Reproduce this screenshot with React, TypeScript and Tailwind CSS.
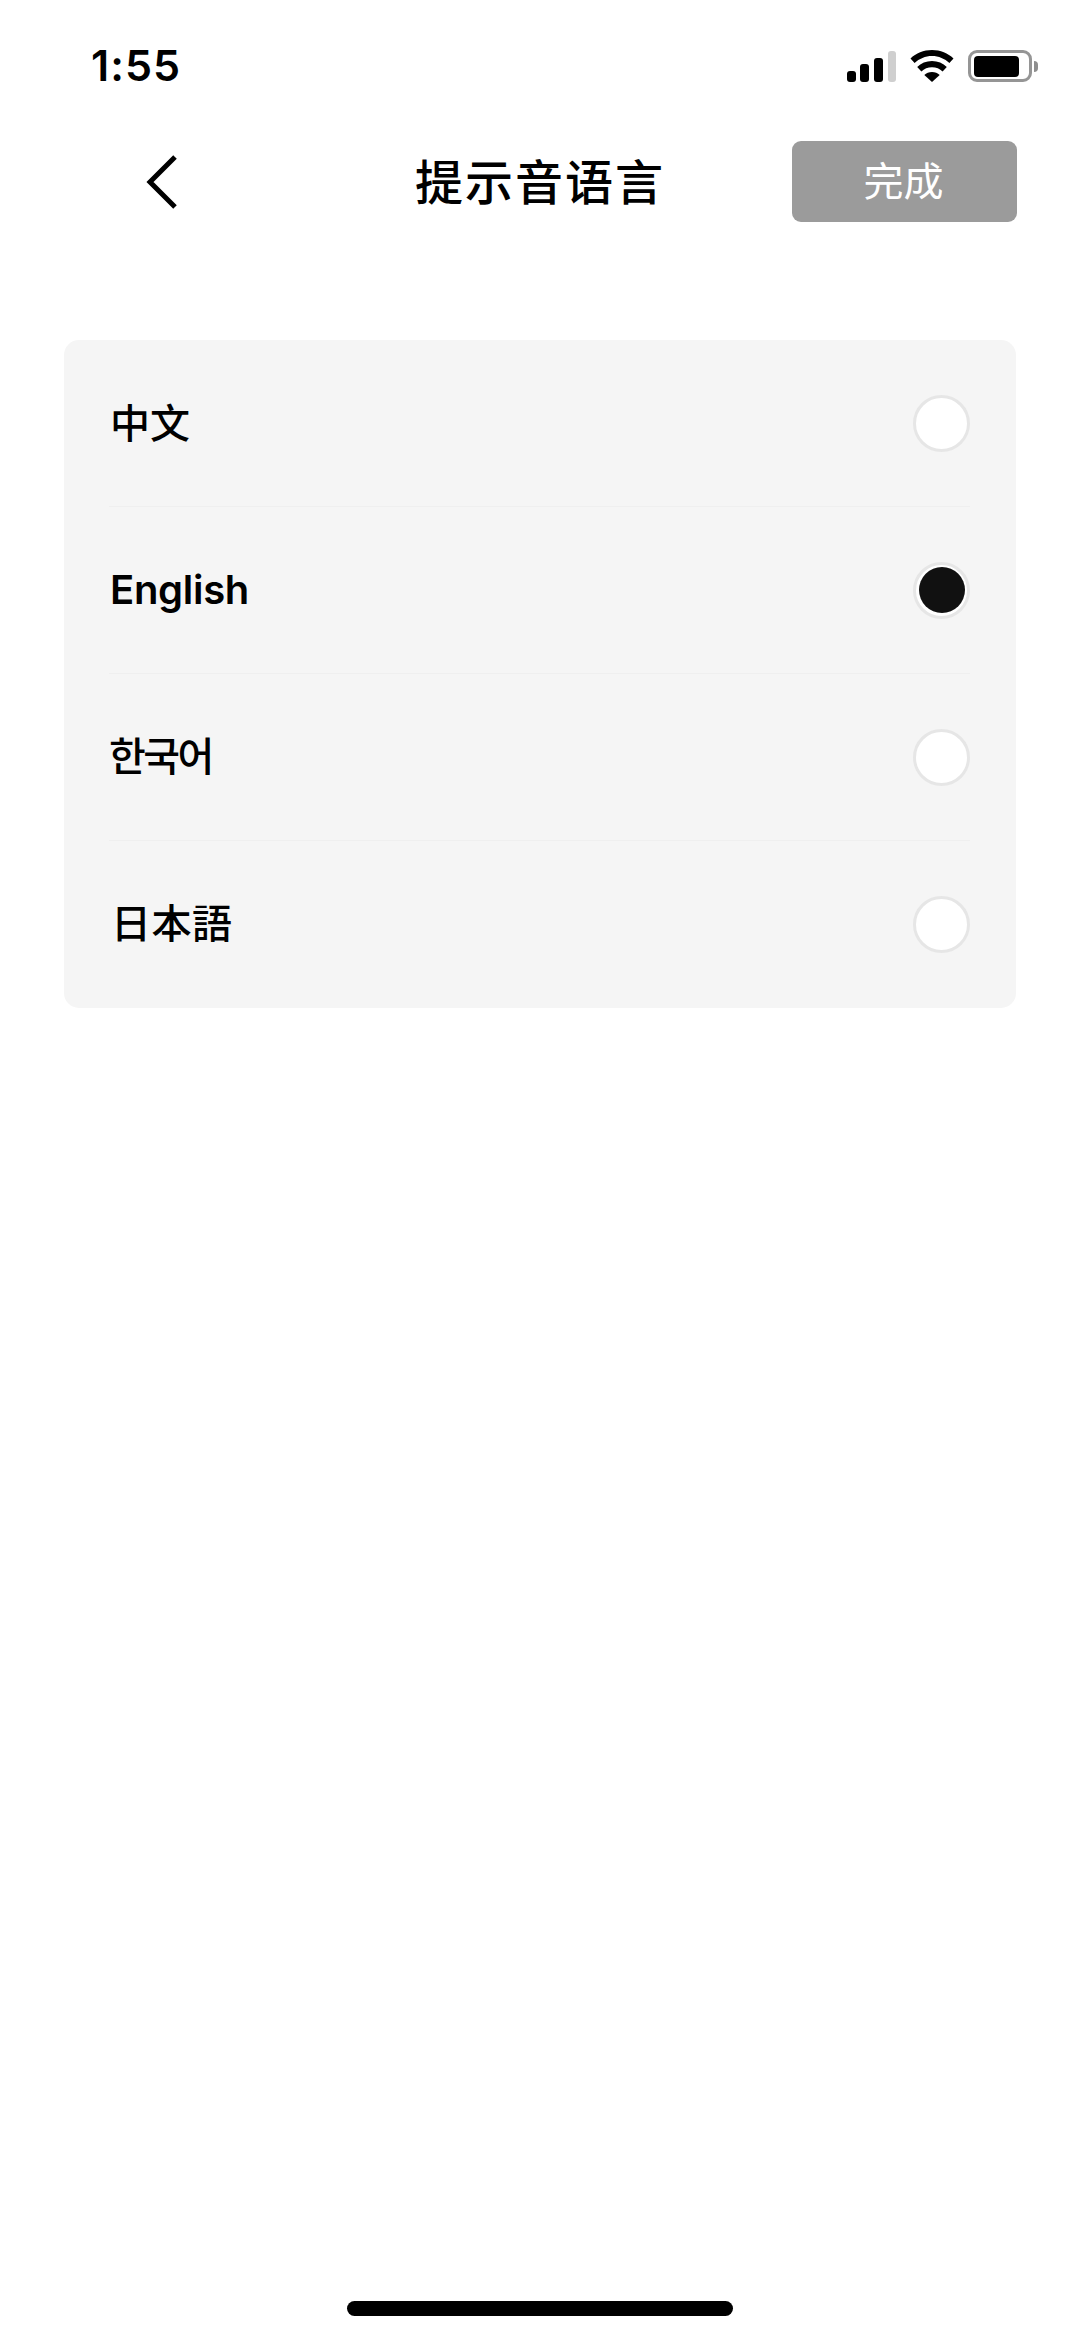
import React, { useState } from 'react';

const languages = [
  { id: 'zh', label: '中文', font: "font-['Inter','Noto_Sans_CJK_SC',sans-serif]", textClass: 'pl-[46px] pt-[1px] font-medium' },
  { id: 'en', label: 'English', font: "font-['Inter','Noto_Sans_CJK_SC',sans-serif]", textClass: 'pl-[46px] font-semibold tracking-[-0.300px]' },
  { id: 'ko', label: '한국어', font: "font-['Inter','Noto_Sans_CJK_KR',sans-serif]", textClass: 'pl-[45px] font-medium tracking-[-2.500px]' },
  { id: 'ja', label: '日本語', font: "font-['Inter','Noto_Sans_CJK_JP',sans-serif]", textClass: 'pl-[47px] font-medium tracking-[0.500px]' },
];

const StatusIcons = () => (
  <div className="flex items-center">
    {/* signal */}
    <svg width="49" height="31" viewBox="0 0 49 31" className="mr-[14px]">
      <rect x="0" y="20" width="9" height="11" rx="3" fill="#000" />
      <rect x="13" y="13" width="9" height="18" rx="3" fill="#000" />
      <rect x="27" y="7" width="9" height="24" rx="3" fill="#000" />
      <rect x="41" y="0" width="8" height="31" rx="3" fill="#cfcfcf" />
    </svg>
    {/* wifi */}
    <svg width="44" height="32" viewBox="0 0 44 32" className="mr-[14px]">
      <path d="M22 0C13.600 0 6 3.200 0.500 8.500L4.600 13C9.200 8.700 15.300 6 22 6s12.800 2.700 17.400 7l4.100-4.500C38 3.200 30.400 0 22 0z" fill="#000" />
      <path d="M22 11c-5.800 0-11 2.200-14.800 5.900l4.200 4.500C14.100 18.800 17.900 17.200 22 17.200s7.900 1.600 10.600 4.200l4.200-4.500C33 13.200 27.800 11 22 11z" fill="#000" />
      <path d="M22 22c-3 0-5.700 1.100-7.700 3L22 32l7.700-7c-2-1.900-4.700-3-7.700-3z" fill="#000" />
    </svg>
    {/* battery */}
    <div className="flex items-center">
      <div className="flex h-[32px] w-[64px] items-center rounded-[9px] border-[3px] border-[#959595] pl-[3px]">
        <div className="h-[21px] w-[45px] rounded-[4px] bg-black" />
      </div>
      <div className="ml-[2px] h-[11px] w-[4px] rounded-r-full bg-[#8e8e8e]" />
    </div>
  </div>
);

const App: React.FC = () => {
  const [selected, setSelected] = useState('en');

  return (
    <div className="flex h-[2339px] w-[1080px] flex-col bg-white font-['Inter','Noto_Sans_CJK_SC',sans-serif] text-black">
      {/* status bar */}
      <div className="flex h-[141px] items-start justify-between pl-[91px] pr-[42px] pt-[50px]">
        <span className="mt-[-3px] text-[43px] leading-[36px] font-semibold tracking-[1px]">1:55</span>
        <StatusIcons />
      </div>

      {/* header */}
      <div className="grid h-[81px] grid-cols-[1fr_auto_1fr] items-center">
        <button className="ml-[146px] flex h-[56px] w-[32px] items-center">
          <svg width="32" height="56" viewBox="0 0 32 56" fill="none">
            <path d="M29 3L4 28l25 25" stroke="#000" strokeWidth="5" />
          </svg>
        </button>
        <h1 className="mt-[-5px] text-[48px] leading-[60px] font-medium tracking-[2px] font-['Noto_Sans_CJK_SC',sans-serif]">提示音语言</h1>
        <div className="flex justify-end pr-[63px]">
          <button className="flex h-[81px] w-[225px] items-center justify-center rounded-[9px] bg-[#9b9b9b] pr-[2px] pb-[5px] text-[40px] font-normal text-white font-['Noto_Sans_CJK_SC',sans-serif]">
            完成
          </button>
        </div>
      </div>

      {/* language list */}
      <div className="mt-[118px] mr-[64px] ml-[64px] rounded-[15px] bg-[#f5f5f5] pb-px">
        {languages.map((lang, i) => (
          <div key={lang.id} onClick={() => setSelected(lang.id)}>
            {i > 0 && <div className="mr-[46px] ml-[45px] h-px bg-[#efefef]" />}
            <div className={`flex h-[166px] items-center justify-between pr-[46px] text-[40px] ${lang.font} ${lang.textClass}`}>
              <span>{lang.label}</span>
              <div className="flex h-[57px] w-[57px] items-center justify-center rounded-full border-[3px] border-[#e6e6e6] bg-white">
                {selected === lang.id && <div className="h-[46px] w-[46px] rounded-full bg-[#111111]" />}
              </div>
            </div>
          </div>
        ))}
      </div>

      {/* home indicator */}
      <div className="mt-auto flex justify-center pb-[23px]">
        <div className="h-[15px] w-[386px] rounded-full bg-black" />
      </div>
    </div>
  );
};

export default App;
